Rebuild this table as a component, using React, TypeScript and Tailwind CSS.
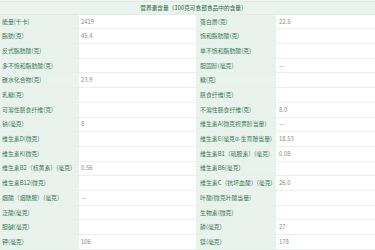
import React from 'react';

type Row = [string, string, string, string];

const rows: Row[] = [
  ['能量(千卡)', '2419', '蛋白质(克)', '22.5'],
  ['脂肪(克)', '45.4', '饱和脂肪酸(克)', ''],
  ['反式脂肪酸(克)', '', '单不饱和脂肪酸(克)', ''],
  ['多不饱和脂肪酸(克)', '', '胆固醇(毫克)', '—'],
  ['碳水化合物(克)', '23.9', '糖(克)', ''],
  ['乳糖(克)', '', '膳食纤维(克)', ''],
  ['可溶性膳食纤维(克)', '', '不溶性膳食纤维(克)', '8.0'],
  ['钠(毫克)', '8', '维生素A(微克视黄醇当量)', '—'],
  ['维生素D(微克)', '', '维生素E(毫克α-生育酚当量)', '18.53'],
  ['维生素K(微克)', '', '维生素B1（硫胺素）(毫克)', '0.08'],
  ['维生素B2（核黄素）(毫克)', '0.56', '维生素B6(毫克)', ''],
  ['维生素B12(微克)', '', '维生素C（抗坏血酸）(毫克)', '26.0'],
  ['烟酸（烟酰胺）(毫克)', '—', '叶酸(微克叶酸当量)', ''],
  ['泛酸(毫克)', '', '生物素(微克)', ''],
  ['胆碱(毫克)', '', '磷(毫克)', '27'],
  ['钾(毫克)', '106', '镁(毫克)', '178'],
];

export default function App() {
  return (
    <div
      className="w-[375px] h-[250px] overflow-hidden bg-white text-[5.9px] leading-none"
      style={{ fontFamily: '"Noto Sans CJK SC", "Noto Sans", sans-serif' }}
    >
      <div className="h-[2px] bg-[#eef5f1] border-b border-[#e3e9e6]" />
      <div className="h-[12.7px] bg-[#eaf4ef] border-b border-[#e3e9e6] flex items-center justify-center pl-[12px] text-[5.7px] text-[#3f7a58] font-medium">
        营养素含量（100克可食部食品中的含量）
      </div>
      {rows.map((r, i) => (
        <div
          key={i}
          className="grid grid-cols-[79px_117px_80px_1fr] h-[14.7px] border-b border-[#eceeed]"
        >
          <div className="bg-[#e8f3ee] flex items-center pl-[2px] text-[#3f7a58] whitespace-nowrap">{r[0]}</div>
          <div className="flex items-center pl-[2px] text-[#888]">{r[1]}</div>
          <div className="bg-[#e8f3ee] flex items-center pl-[4px] text-[#3f7a58] whitespace-nowrap">{r[2]}</div>
          <div className="flex items-center pl-[3px] text-[#888]">{r[3]}</div>
        </div>
      ))}
    </div>
  );
}
